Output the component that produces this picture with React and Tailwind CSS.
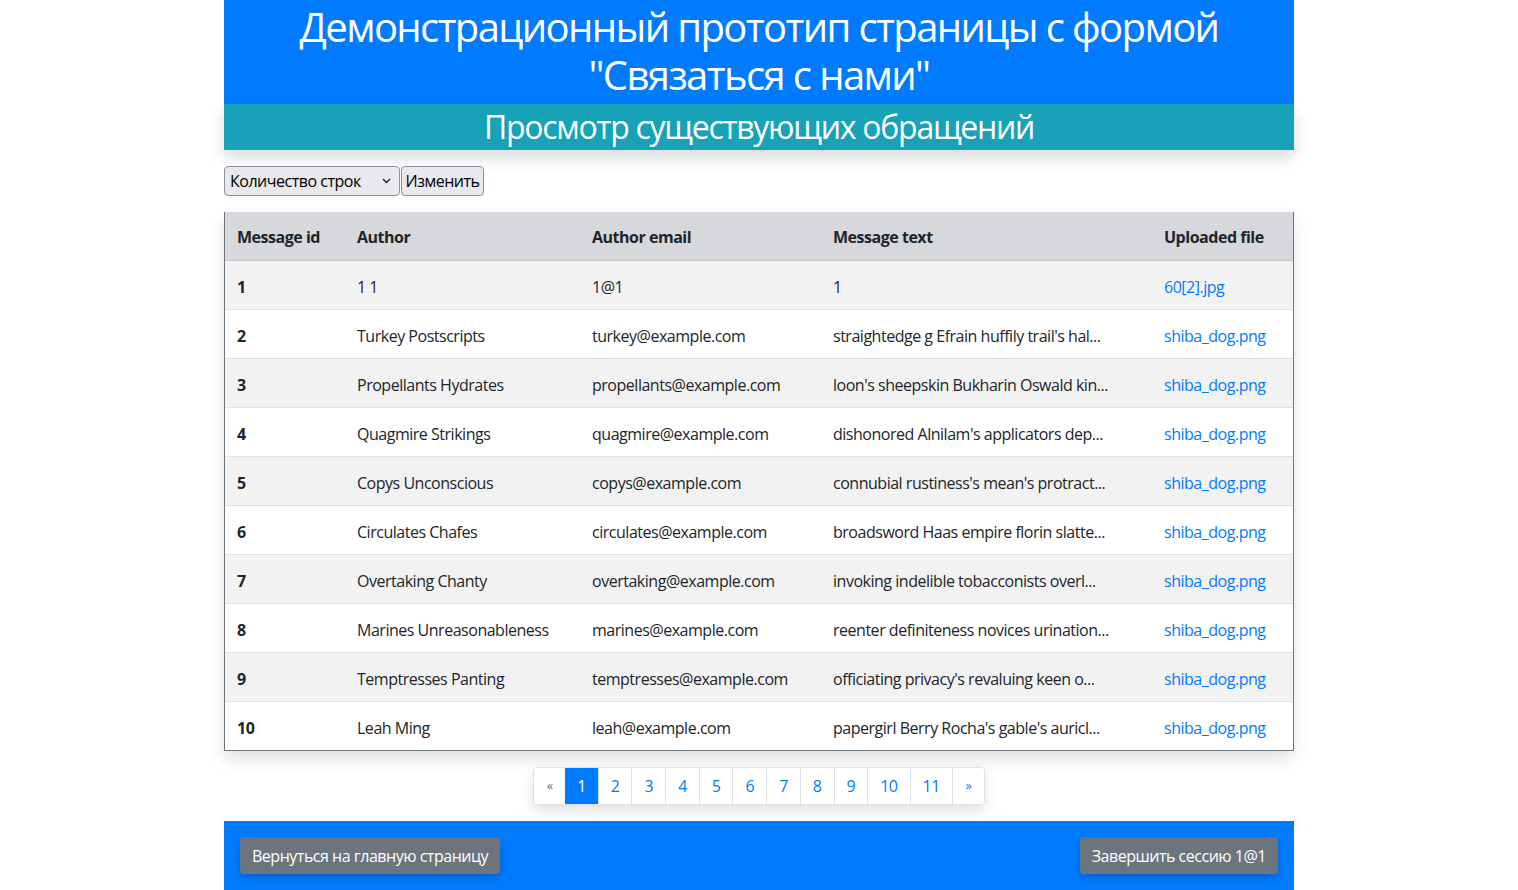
import React from "react";

const rows = [
  ["1", "1 1", "1@1", "1", "60[2].jpg"],
  ["2", "Turkey Postscripts", "turkey@example.com", "straightedge g Efrain huffily trail's hal...", "shiba_dog.png"],
  ["3", "Propellants Hydrates", "propellants@example.com", "loon's sheepskin Bukharin Oswald kin...", "shiba_dog.png"],
  ["4", "Quagmire Strikings", "quagmire@example.com", "dishonored Alnilam's applicators dep...", "shiba_dog.png"],
  ["5", "Copys Unconscious", "copys@example.com", "connubial rustiness's mean's protract...", "shiba_dog.png"],
  ["6", "Circulates Chafes", "circulates@example.com", "broadsword Haas empire florin slatte...", "shiba_dog.png"],
  ["7", "Overtaking Chanty", "overtaking@example.com", "invoking indelible tobacconists overl...", "shiba_dog.png"],
  ["8", "Marines Unreasonableness", "marines@example.com", "reenter definiteness novices urination...", "shiba_dog.png"],
  ["9", "Temptresses Panting", "temptresses@example.com", "officiating privacy's revaluing keen o...", "shiba_dog.png"],
  ["10", "Leah Ming", "leah@example.com", "papergirl Berry Rocha's gable's auricl...", "shiba_dog.png"],
];

const pages = ["1", "2", "3", "4", "5", "6", "7", "8", "9", "10", "11"];

const App = () => {
  return (
    <div className="min-h-screen bg-white text-[#212529] font-['Open_Sans',sans-serif] text-[16px] tracking-[-0.03em]">
      <div className="w-[1070px] mx-auto">
        {/* Header */}
        <div className="bg-[#007bff] text-white text-center text-[40px] leading-[48px] font-normal tracking-[-0.04em] pt-[3px] pb-[5px] px-10">
          Демонстрационный прототип страницы с формой "Связаться с нами"
        </div>
        <div className="bg-[#17a2b8] text-white text-center text-[32px] leading-[38px] tracking-[-0.04em] py-[4px] shadow-[0_8px_16px_rgba(0,0,0,0.15)]">
          Просмотр существующих обращений
        </div>

        {/* Rows control */}
        <div className="flex items-center mt-4 gap-[1px]">
          <div className="relative w-[176px] h-[30px] bg-[#e9e9ed] border border-[#8f8f9d] rounded-[4px] flex items-center px-[5px] text-[16px] text-black">
            Количество строк
            <svg className="absolute right-[8px] top-[11px]" width="9" height="6" viewBox="0 0 9 6">
              <path d="M1 1l3.5 3.5L8 1" fill="none" stroke="#222" strokeWidth="1.4" />
            </svg>
          </div>
          <button className="h-[30px] w-[83px] bg-[#e9e9ed] border border-[#8f8f9d] rounded-[4px] text-[16px] text-black">
            Изменить
          </button>
        </div>

        {/* Table */}
        <div className="mt-4 border-x border-b border-[#6c757d] shadow-[0_8px_16px_rgba(0,0,0,0.12)]">
          <table className="w-full border-collapse table-fixed">
            <colgroup>
              <col className="w-[120px]" />
              <col className="w-[235px]" />
              <col className="w-[241px]" />
              <col className="w-[331px]" />
              <col />
            </colgroup>
            <thead>
              <tr className="bg-[#d6d8db] text-left">
                <th className="px-3 pt-[13px] pb-[11px] leading-6 font-bold border-b border-[#c4c7cb]">Message id</th>
                <th className="px-3 pt-[13px] pb-[11px] leading-6 font-bold border-b border-[#c4c7cb]">Author</th>
                <th className="px-3 pt-[13px] pb-[11px] leading-6 font-bold border-b border-[#c4c7cb]">Author email</th>
                <th className="px-3 pt-[13px] pb-[11px] leading-6 font-bold border-b border-[#c4c7cb]">Message text</th>
                <th className="px-3 pt-[13px] pb-[11px] leading-6 font-bold border-b border-[#c4c7cb]">Uploaded file</th>
              </tr>
            </thead>
            <tbody>
              {rows.map((r, i) => {
                const b = i < rows.length - 1 ? "border-b border-[#dee2e6]" : "";
                return (
                  <tr key={r[0]} className={i % 2 === 0 ? "bg-[#f2f2f2]" : "bg-white"}>
                    <td className={`px-3 pt-[14px] pb-[10px] leading-6 font-bold ${b}`}>{r[0]}</td>
                    <td className={`px-3 pt-[14px] pb-[10px] leading-6 ${b}`}>{r[1]}</td>
                    <td className={`px-3 pt-[14px] pb-[10px] leading-6 ${b}`}>{r[2]}</td>
                    <td className={`px-3 pt-[14px] pb-[10px] leading-6 whitespace-nowrap ${b}`}>{r[3]}</td>
                    <td className={`px-3 pt-[14px] pb-[10px] leading-6 ${b}`}>
                      <a className="text-[#007bff]" href="#">{r[4]}</a>
                    </td>
                  </tr>
                );
              })}
            </tbody>
          </table>
        </div>

        {/* Pagination */}
        <div className="flex justify-center mt-4">
          <div className="flex rounded-[4px] border border-[#dee2e6] shadow-[0_6px_14px_rgba(0,0,0,0.12)] overflow-hidden">
            <span className="w-[31px] justify-center h-[36px] flex items-center text-[#6c757d] text-[13px] bg-white">«</span>
            {pages.map((p) => (
              <span
                key={p}
                className={
                  p === "1"
                    ? "px-[12px] h-[36px] flex items-center bg-[#007bff] text-white"
                    : "px-[12px] h-[36px] flex items-center text-[#007bff] bg-white border-l border-[#dee2e6]"
                }
              >
                {p}
              </span>
            ))}
            <span className="w-[32px] justify-center h-[36px] flex items-center text-[#007bff] text-[13px] bg-white border-l border-[#dee2e6]">»</span>
          </div>
        </div>

        {/* Footer */}
        <div className="bg-[#007bff] mt-4 px-4 pt-4 pb-6 flex justify-between">
          <button className="bg-[#6c757d] text-white rounded-[4px] px-3 pt-[7px] pb-[6px] leading-6 shadow-[0_4px_10px_rgba(0,0,0,0.2)]">
            Вернуться на главную страницу
          </button>
          <button className="bg-[#6c757d] text-white rounded-[4px] px-3 pt-[7px] pb-[6px] leading-6 shadow-[0_4px_10px_rgba(0,0,0,0.2)]">
            Завершить сессию 1@1
          </button>
        </div>
      </div>
    </div>
  );
};

export default App;
